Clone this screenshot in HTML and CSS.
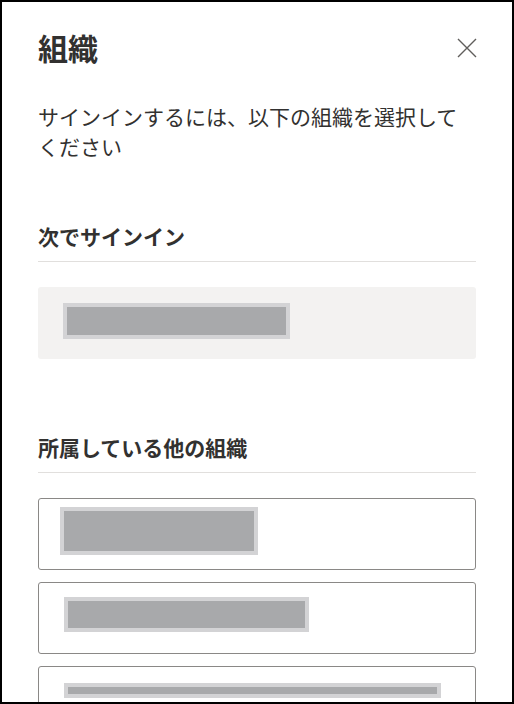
FILE: index.html
```html
<!DOCTYPE html>
<html lang="ja">
<head>
<meta charset="utf-8">
<title>組織</title>
<link rel="stylesheet" href="styles.css">
</head>
<body>
<div class="frame">
  <header class="header">
    <h1 class="title">組織</h1>
    <button class="close" aria-label="閉じる">
      <svg width="20" height="20" viewBox="0 0 20 20"><path d="M1 1 L19 19 M19 1 L1 19" stroke="#605e5c" stroke-width="1.4" fill="none"/></svg>
    </button>
  </header>
  <p class="intro">サインインするには、以下の組織を選択してください</p>

  <h2 class="section-title">次でサインイン</h2>
  <div class="current">
    <div class="redact redact-current"></div>
  </div>

  <h2 class="section-title section-title-other">所属している他の組織</h2>
  <ul class="org-list">
    <li class="org"><div class="redact redact-a"></div></li>
    <li class="org"><div class="redact redact-b"></div></li>
    <li class="org"><div class="redact redact-c"></div></li>
  </ul>
</div>
</body>
</html>
```
FILE: styles.css
```css
html, body {
  margin: 0;
  padding: 0;
  background: #fff;
}
body {
  font-family: "Noto Sans CJK JP", "Noto Sans", sans-serif;
  color: #323130;
}
.frame {
  width: 514px;
  height: 704px;
  box-sizing: border-box;
  border: 2px solid #000;
  padding: 0 36px;
  overflow: hidden;
  background: #fff;
}
.header {
  display: flex;
  justify-content: space-between;
  align-items: center;
  margin-top: 24px;
  height: 44px;
}
.title {
  margin: 0;
  font-size: 30px;
  line-height: 44px;
  font-weight: 700;
  margin-top: -2px;
}
.close {
  border: 0;
  background: none;
  padding: 0;
  width: 20px;
  height: 20px;
  margin-right: -1px;
  display: flex;
}
.intro {
  margin: 31px 0 0;
  font-size: 21px;
  line-height: 30px;
}
.section-title {
  margin: 60px 0 0;
  font-size: 21px;
  line-height: 30px;
  font-weight: 700;
  padding-bottom: 10px;
  border-bottom: 1px solid #e1dfdd;
}
.section-title-other {
  margin-top: 73px;
}
.current {
  margin-top: 25px;
  height: 72px;
  background: #f3f2f1;
  border-radius: 3px;
  display: flex;
  align-items: center;
  padding-left: 25px;
}
.redact {
  box-sizing: border-box;
  background: #a8a9ab;
  border: 4px solid #d3d3d5;
}
.redact-current {
  width: 227px;
  height: 36px;
  margin-top: -4px;
}
.org-list {
  list-style: none;
  margin: 25px 0 0;
  padding: 0;
  display: flex;
  flex-direction: column;
  gap: 12px;
}
.org {
  box-sizing: border-box;
  height: 72px;
  border: 1px solid #8a8886;
  border-radius: 3px;
  padding-left: 21px;
}
.redact-a {
  width: 198px;
  height: 48px;
  margin-top: 8px;
}
.redact-b {
  width: 245px;
  height: 35px;
  margin-top: 14px;
  margin-left: 4px;
}
.redact-c {
  width: 377px;
  height: 15px;
  margin-top: 16px;
  margin-left: 4px;
}
```
